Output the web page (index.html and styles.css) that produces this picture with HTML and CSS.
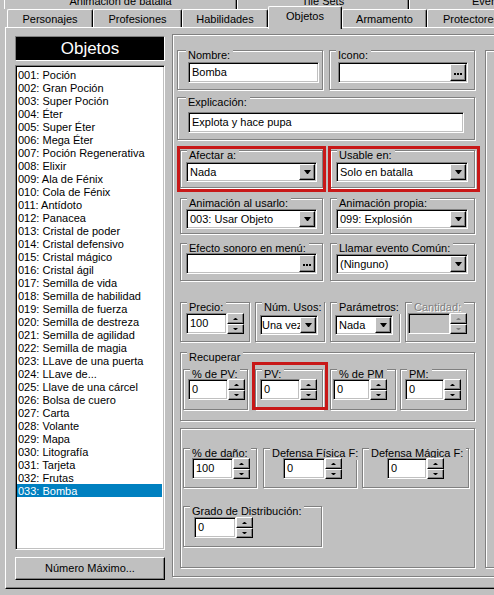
FILE: index.html
```html
<!DOCTYPE html>
<html lang="es">
<head>
<meta charset="utf-8">
<title>Base de datos - Objetos</title>
<link rel="stylesheet" href="styles.css">
</head>
<body>
<div class="win">
  <div class="tabs1">
    <div class="tab1 t-anim">Animación de batalla</div>
    <div class="tab1 t-tile">Tile Sets</div>
    <div class="tab1 t-eve">Eventos Comunes</div>
  </div>
  <div class="tabs2">
    <div class="tab w-pers">Personajes</div>
    <div class="tab w-prof">Profesiones</div>
    <div class="tab w-hab">Habilidades</div>
    <div class="tab sel w-obj">Objetos</div>
    <div class="tab w-arm">Armamento</div>
    <div class="tab w-prot">Protectores</div>
  </div>
  <div class="panel">
    <div class="left">
      <div class="head">Objetos</div>
      <div class="list">
        <div class="item">001: Poción</div>
        <div class="item">002: Gran Poción</div>
        <div class="item">003: Super Poción</div>
        <div class="item">004: Éter</div>
        <div class="item">005: Super Éter</div>
        <div class="item">006: Mega Éter</div>
        <div class="item">007: Poción Regenerativa</div>
        <div class="item">008: Elixir</div>
        <div class="item">009: Ala de Fénix</div>
        <div class="item">010: Cola de Fénix</div>
        <div class="item">011: Antídoto</div>
        <div class="item">012: Panacea</div>
        <div class="item">013: Cristal de poder</div>
        <div class="item">014: Cristal defensivo</div>
        <div class="item">015: Cristal mágico</div>
        <div class="item">016: Cristal ágil</div>
        <div class="item">017: Semilla de vida</div>
        <div class="item">018: Semilla de habilidad</div>
        <div class="item">019: Semilla de fuerza</div>
        <div class="item">020: Semilla de destreza</div>
        <div class="item">021: Semilla de agilidad</div>
        <div class="item">022: Semilla de magia</div>
        <div class="item">023: LLave de una puerta</div>
        <div class="item">024: LLave de...</div>
        <div class="item">025: Llave de una cárcel</div>
        <div class="item">026: Bolsa de cuero</div>
        <div class="item">027: Carta</div>
        <div class="item">028: Volante</div>
        <div class="item">029: Mapa</div>
        <div class="item">030: Litografía</div>
        <div class="item">031: Tarjeta</div>
        <div class="item">032: Frutas</div>
        <div class="item on">033: Bomba</div>
      </div>
      <div class="btn">Número Máximo...</div>
    </div>

    <div class="main eb">
      <div class="mleft">
        <div class="row r1">
          <div class="gb g-nom">
            <span class="gl gl8">Nombre:</span>
            <div class="inp in-nom"><span class="tx">Bomba</span></div>
          </div>
          <div class="gb g-ico">
            <span class="gl">Icono:</span>
            <div class="inp in-ico"><span class="tx"></span><span class="bt dots"><svg width="8" height="2" viewBox="0 0 8 2"><rect x="0" y="0" width="2" height="2"/><rect x="3" y="0" width="2" height="2"/><rect x="6" y="0" width="2" height="2"/></svg></span></div>
          </div>
        </div>

        <div class="row r2">
          <div class="gb g-exp">
            <span class="gl gl8">Explicación:</span>
            <div class="inp in-exp"><span class="tx">Explota y hace pupa</span></div>
          </div>
        </div>

        <div class="row r3">
          <div class="gb gL g-afe">
            <span class="gl">Afectar a:</span>
            <div class="cmb c-l"><span class="tx">Nada</span><span class="bt dd"></span></div>
          </div>
          <div class="gb gR g-usa">
            <span class="gl">Usable en:</span>
            <div class="cmb c-r"><span class="tx">Solo en batalla</span><span class="bt dd"></span></div>
          </div>
        </div>

        <div class="row r4">
          <div class="gb gL h36">
            <span class="gl">Animación al usarlo:</span>
            <div class="cmb c-l up1"><span class="tx">003: Usar Objeto</span><span class="bt dd"></span></div>
          </div>
          <div class="gb gR h36">
            <span class="gl">Animación propia:</span>
            <div class="cmb c-r up1"><span class="tx">099: Explosión</span><span class="bt dd"></span></div>
          </div>
        </div>

        <div class="row r5">
          <div class="gb gL h38">
            <span class="gl">Efecto sonoro en menú:</span>
            <div class="inp c-l in-efe"><span class="tx"></span><span class="bt dots"><svg width="8" height="2" viewBox="0 0 8 2"><rect x="0" y="0" width="2" height="2"/><rect x="3" y="0" width="2" height="2"/><rect x="6" y="0" width="2" height="2"/></svg></span></div>
          </div>
          <div class="gb gR h38">
            <span class="gl">Llamar evento Común:</span>
            <div class="cmb c-r in-lla"><span class="tx">(Ninguno)</span><span class="bt dd"></span></div>
          </div>
        </div>

        <div class="row r6">
          <div class="gb g70">
            <span class="gl">Precio:</span>
            <div class="spin s-pre"><span class="sv">100</span><span class="ud"><span class="b up"></span><span class="b dn"></span></span></div>
          </div>
          <div class="gb g70">
            <span class="gl">Núm. Usos:</span>
            <div class="cmb c-uso"><span class="tx tx0">Una vez</span><span class="bt dd"></span></div>
          </div>
          <div class="gb g70">
            <span class="gl">Parámetros:</span>
            <div class="cmb c-par"><span class="tx">Nada</span><span class="bt dd"></span></div>
          </div>
          <div class="gb g70">
            <span class="gl dis">Cantidad:</span>
            <div class="spin s-can"><span class="sv off"></span><span class="ud off"><span class="b up"></span><span class="b dn"></span></span></div>
          </div>
        </div>

        <div class="gb g-rec">
          <span class="gl">Recuperar</span>
          <div class="row rec-row">
            <div class="gb g-ppv">
              <span class="gl">% de PV:</span>
              <div class="spin s-ppv"><span class="sv">0</span><span class="ud"><span class="b up"></span><span class="b dn"></span></span></div>
            </div>
            <div class="gb g-pv">
              <span class="gl">PV:</span>
              <div class="spin s-pv"><span class="sv">0</span><span class="ud"><span class="b up"></span><span class="b dn"></span></span></div>
            </div>
            <div class="gb g-ppm">
              <span class="gl">% de PM</span>
              <div class="spin s-ppm"><span class="sv">0</span><span class="ud"><span class="b up"></span><span class="b dn"></span></span></div>
            </div>
            <div class="gb g-pm">
              <span class="gl">PM:</span>
              <div class="spin s-pm"><span class="sv">0</span><span class="ud"><span class="b up"></span><span class="b dn"></span></span></div>
            </div>
          </div>
        </div>

        <div class="gb g-dmg">
          <div class="row dmg-row">
            <div class="gb g-dan">
              <span class="gl">% de daño:</span>
              <div class="spin s-dan"><span class="sv">100</span><span class="ud"><span class="b up"></span><span class="b dn"></span></span></div>
            </div>
            <div class="gb g-dfi">
              <span class="gl">Defensa Física F:</span>
              <div class="spin s-dfi"><span class="sv">0</span><span class="ud"><span class="b up"></span><span class="b dn"></span></span></div>
            </div>
            <div class="gb g-dma">
              <span class="gl">Defensa Mágica F:</span>
              <div class="spin s-dma"><span class="sv">0</span><span class="ud"><span class="b up"></span><span class="b dn"></span></span></div>
            </div>
          </div>
          <div class="gb g-gra">
            <span class="gl">Grado de Distribución:</span>
            <div class="spin s-gra"><span class="sv">0</span><span class="ud"><span class="b up"></span><span class="b dn"></span></span></div>
          </div>
        </div>
      </div>
      <div class="mright eb"></div>
    </div>
  </div>
</div>
</body>
</html>
```
FILE: styles.css
```css
* { box-sizing: border-box; margin: 0; padding: 0; }
html, body { width: 494px; height: 595px; overflow: hidden; }
body {
  background: #c0c0c0;
  font: 11px/13px "Liberation Sans", Arial, sans-serif;
  color: #000;
}
.win { width: 700px; }

/* ---------- tabs ---------- */
.tabs1 { display: flex; align-items: flex-end; height: 9px; padding-left: 4px; }
.tab1 {
  flex: none; height: 18px; padding-top: 3px;
  border: 1px solid #fff; border-right-color: #000; border-bottom: 0;
  box-shadow: inset -1px 0 #808080;
  text-align: center; white-space: nowrap;
}
.t-anim { width: 233px; }
.t-tile { width: 172px; }
.t-eve { width: 216px; text-align: left; padding-left: 62px; }

.tabs2 { display: flex; align-items: flex-end; height: 18px; padding-left: 7px; }
.tab {
  flex: none; height: 18px; padding-top: 3px;
  border: 1px solid #fff; border-right-color: #000; border-bottom: 0;
  border-radius: 2px 2px 0 0;
  box-shadow: inset -1px 0 #808080;
  text-align: center; white-space: nowrap; background: #c0c0c0;
}
.tab.sel { height: 23px; margin-bottom: -2px; position: relative; z-index: 1; }
.w-pers { width: 86px; }
.w-prof { width: 89px; }
.w-hab { width: 86px; }
.w-obj { width: 74px; }
.w-arm { width: 85px; }
.w-prot { width: 88px; }

/* ---------- tab page ---------- */
.panel {
  margin-left: 5px; width: 620px; height: 562px;
  border: 1px solid #fff; border-right-color: #000; border-bottom-color: #000;
  box-shadow: inset -1px -1px #808080;
  display: flex; align-items: flex-start;
  padding: 6px 0 0 9px;
}

.left { flex: none; width: 150px; display: flex; flex-direction: column; margin-top: 2px; }
.head {
  height: 25px; background: #000; color: #fff;
  font-size: 17px; line-height: 23px; text-align: center;
  border: 1px solid; border-color: #808080 #fff #fff #808080;
}
.list {
  margin-top: 4px; height: 485px; background: #fff;
  border: 1px solid; border-color: #808080 #fff #fff #808080;
  box-shadow: inset 1px 1px #000, inset -1px -1px #c0c0c0;
  padding: 2px 2px 0 1px;
}
.item { height: 13px; line-height: 13px; padding: 1px 0 0 1px; white-space: nowrap; }
.item.on { background: #0080c0; color: #fff; }
.btn {
  margin-top: 7px; height: 23px; line-height: 21px; text-align: center;
  border: 1px solid; border-color: #fff #000 #000 #fff;
  box-shadow: inset -1px -1px #808080;
}

/* ---------- etched frames ---------- */
.eb, .gb {
  border: 1px solid #808080;
  box-shadow: inset 1px 1px #fff, 1px 1px #fff;
}
.main { flex: none; margin-left: 7px; width: 420px; height: 543px; display: flex; align-items: flex-start; }
.mleft { flex: none; width: 304px; display: flex; flex-direction: column; align-items: flex-start; }
.mright { flex: none; margin: 15px 0 0 8px; width: 100px; height: 518px; }

.gb { flex: none; display: flex; flex-direction: column; align-items: flex-start; position: relative; }
.gl {
  flex: none; margin: -2px 0 0 6px; padding: 0 3px 0 2px;
  height: 13px; line-height: 13px; background: #c0c0c0; white-space: nowrap;
}
.gl8 { margin-left: 8px; }
.gl.dis { color: #808080; text-shadow: 1px 1px 0 #fff; }

.row { display: flex; align-items: flex-start; }
.r1 { margin: 15px 0 0 4px; gap: 6px; }
.r2 { margin: 7px 0 0 4px; }
.r3 { margin: 10px 0 0 7px; gap: 7px; }
.r4 { margin: 10px 0 0 7px; gap: 7px; }
.r5 { margin: 9px 0 0 7px; gap: 7px; }
.r6 { margin: 21px 0 0 7px; gap: 5px; }

.g-nom, .g-ico { width: 146px; height: 40px; }
.g-exp { width: 298px; height: 43px; }
.gL { width: 143px; height: 38px; }
.gR { width: 145px; height: 38px; }
.gb.h36 { height: 36px; }
.gb.h38 { height: 38px; }
.g70 { width: 70px; height: 40px; }

.g-rec { margin: 10px 0 0 7px; width: 295px; height: 69px; }
.rec-row { margin: 5px 0 0 2px; }
.g-ppv { width: 65px; height: 41px; }
.g-pv { width: 68px; height: 41px; margin-left: 7px; }
.g-ppm { width: 66px; height: 41px; margin-left: 7px; }
.g-pm { width: 67px; height: 41px; margin-left: 4px; }

.g-dmg { margin: 7px 0 0 7px; width: 295px; height: 140px; }
.dmg-row { margin: 19px 0 0 2px; }
.g-dan { width: 74px; height: 40px; }
.g-dfi { width: 94px; height: 40px; margin-left: 6px; }
.g-dma { width: 107px; height: 40px; margin-left: 5px; }
.g-gra { margin: 18px 0 0 2px; width: 139px; height: 41px; }

/* ---------- controls ---------- */
.inp, .cmb, .sv {
  background: #fff;
  border: 1px solid; border-color: #808080 #fff #fff #808080;
  box-shadow: inset 1px 1px #000, inset -1px -1px #c0c0c0;
}
.inp { display: flex; height: 21px; padding: 1px 1px 1px 3px; line-height: 17px; }
.cmb { display: flex; height: 20px; padding: 1px 1px 1px 3px; line-height: 16px; }
.tx { flex: 1; min-width: 0; overflow: hidden; white-space: nowrap; }
.tx0 { margin-left: -2px; }

.bt {
  flex: none; background: #c0c0c0;
  border: 1px solid; border-color: #fff #000 #000 #fff;
  box-shadow: inset -1px -1px #808080;
  display: flex; align-items: center; justify-content: center;
}
.dots { width: 16px; height: 17px; }
.dots svg { fill: #000; margin-top: 3px; }
.dd { width: 16px; height: 16px; }
.dd::after {
  content: ""; width: 1px; height: 0;
  border-left: 3px solid transparent; border-right: 3px solid transparent;
  border-top: 4px solid #000;
}

.in-nom { width: 131px; margin-left: 10px; }
.in-ico { width: 130px; margin-left: 8px; }
.in-exp { width: 276px; margin: 3px 0 0 10px; }
.c-l { width: 131px; margin-left: 5px; }
.c-r { width: 132px; margin-left: 5px; }
.up1 { margin-top: -1px; }
.in-efe { margin-top: -2px; }
.in-lla { margin-top: -1px; }
.c-uso { width: 58px; margin: 1px 0 0 4px; }
.c-par { width: 58px; margin: 1px 0 0 4px; }

.spin { display: flex; height: 21px; }
.sv { flex: 1; padding: 1px 1px 1px 3px; line-height: 17px; }
.sv.off { background: #c0c0c0; }
.ud { flex: none; width: 17px; display: flex; flex-direction: column; }
.ud .b {
  background: #c0c0c0;
  border: 1px solid; border-color: #fff #000 #000 #fff;
  box-shadow: inset -1px -1px #808080;
  display: flex; align-items: center; justify-content: center;
}
.ud .up { height: 11px; }
.ud .dn { height: 10px; }
.ud .b::after {
  content: ""; width: 1px; height: 0;
  border-left: 2px solid transparent; border-right: 2px solid transparent;
}
.ud .up::after { border-bottom: 2px solid #000; }
.ud .dn::after { border-top: 2px solid #000; }
.ud.off .up::after { border-bottom-color: #808080; }
.ud.off .dn::after { border-top-color: #808080; }

.s-pre { width: 58px; margin: -1px 0 0 5px; }
.s-can { width: 59px; margin: -1px 0 0 2px; }
.s-ppv { width: 57px; margin: -2px 0 0 4px; }
.s-pv { width: 57px; margin: -2px 0 0 4px; }
.s-ppm { width: 54px; margin: -2px 0 0 2px; }
.s-pm { width: 56px; margin: -2px 0 0 4px; }
.s-dan { width: 58px; margin: -2px 0 0 8px; }
.s-dfi { width: 59px; margin: -2px 0 0 19px; }
.s-dma { width: 57px; margin: -2px 0 0 24px; }
.s-gra { width: 59px; margin: -1px 0 0 10px; }

/* ---------- red annotation frames drawn over the form ---------- */
.g-afe::after, .g-usa::after, .g-pv::after {
  content: ""; position: absolute; z-index: 2;
  border: 3px solid #c81818; pointer-events: none;
}
.g-afe::after { left: -4px; right: -4px; top: -5px; bottom: -5px; }
.g-usa::after { left: -3px; right: -6px; top: -5px; bottom: -5px; }
.g-pv::after { left: -4px; right: -6px; top: -8px; bottom: -1px; }
```
